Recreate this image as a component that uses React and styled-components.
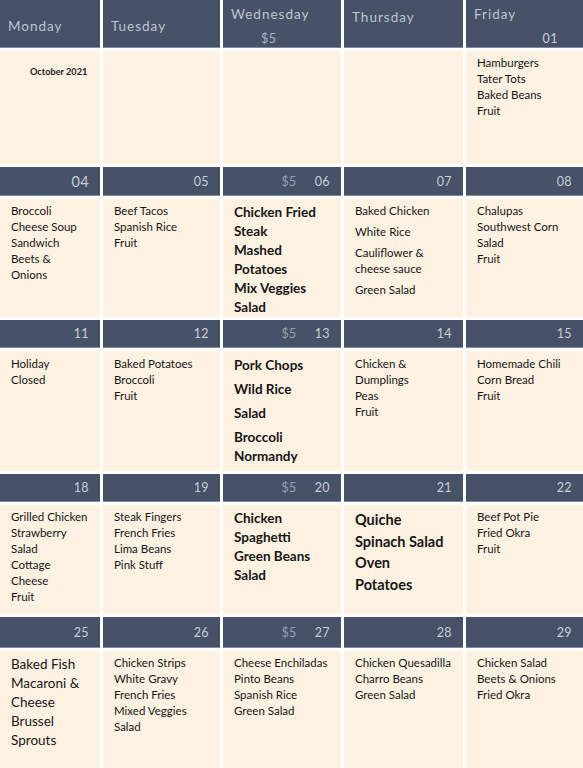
import React from "react";
import styled, { createGlobalStyle, css } from "styled-components";

const Global = createGlobalStyle`
  html, body { margin: 0; padding: 0; background: #ffffff; overflow: hidden; }
  body { font-family: Lato, "Open Sans", sans-serif; }
`;

const Page = styled.div`
  display: grid;
  grid-template-columns: 100px 117px 118px 119px 117px;
  grid-template-rows: 48px 113px 29px 118px 28px 120px 28px 109px 31px 117px;
  gap: 3px;
  width: 583px;
  height: 768px;
  overflow: hidden;
`;

const HeadCell = styled.div`
  box-sizing: border-box;
  background: #475268;
  border-bottom: 1px solid #7e899e;
  color: #c6cdd8;
  font-family: Lato, sans-serif;
  display: flex;
  align-items: center;
  justify-content: flex-end;
  gap: 18px;
  padding-right: 11px;
  font-size: 12.5px;
  letter-spacing: 0.4px;
`;

const DayHead = styled(HeadCell)`
  flex-direction: column;
  align-items: stretch;
  justify-content: flex-start;
  gap: 0;
  padding: ${(p) => p.$top}px 11px 0 8px;
`;

const DayName = styled.div`
  font-size: 13.5px;
  line-height: 17px;
  letter-spacing: 1px;
  color: #bcc5d1;
`;

const HeadExtra = styled.div`
  margin-top: 7px;
  line-height: 17px;
  font-size: 12.5px;
  letter-spacing: 0.5px;
  ${(p) =>
    p.$right
      ? css`
          align-self: flex-end;
          margin-right: 14px;
        `
      : css`
          padding-left: 30px;
          color: #aab3c1;
        `}
`;

const Price = styled.span`
  color: #959fb0;
`;

const DateNum = styled.span`
  font-size: ${(p) => (p.$big ? "14.5px" : "12.5px")};
`;

const Cell = styled.div`
  box-sizing: border-box;
  background: #fdf1e2;
  padding: 4px 6px 0 11px;
  color: #161616;
`;

const Note = styled.div`
  padding: 11px 0 0 19px;
  font-size: 9.2px;
  font-weight: 700;
  line-height: 12px;
  color: #222;
`;

const variants = {
  sm: css`
    font-size: 11.5px;
    line-height: 16px;
    font-weight: 400;
  `,
  md: css`
    font-size: 13.5px;
    line-height: 19px;
    font-weight: 400;
  `,
  bold: css`
    font-size: 13.5px;
    line-height: 19px;
    font-weight: 700;
  `,
  boldLg: css`
    font-size: 14.5px;
    line-height: 21.5px;
    font-weight: 700;
  `,
};

const ItemList = styled.div`
  display: flex;
  flex-direction: column;
  gap: ${(p) => p.$gap || 0}px;
  padding-top: ${(p) => p.$pt || 0}px;
`;

const Item = styled.div`
  white-space: pre-line;
  ${(p) => variants[p.$v || "sm"]}
`;

const headers1 = [
  { name: "Monday", top: 18 },
  { name: "Tuesday", top: 18 },
  { name: "Wednesday", top: 6, extra: "$5" },
  { name: "Thursday", top: 9 },
  { name: "Friday", top: 6, extra: "01", right: true },
];

const weeks = [
  {
    heads: null,
    cells: [
      { note: "October 2021" },
      {},
      {},
      {},
      { items: ["Hamburgers", "Tater Tots", "Baked Beans", "Fruit"], pt: -1 },
    ],
  },
  {
    heads: [{ n: "04", big: true }, { n: "05" }, { n: "06", price: true }, { n: "07" }, { n: "08" }],
    cells: [
      { items: ["Broccoli", "Cheese Soup", "Sandwich", "Beets &", "Onions"] },
      { items: ["Beef Tacos", "Spanish Rice", "Fruit"] },
      {
        v: "bold",
        pt: -1,
        items: ["Chicken Fried", "Steak", "Mashed", "Potatoes", "Mix Veggies", "Salad"],
      },
      {
        gap: 5,
        items: ["Baked Chicken", "White Rice", "Cauliflower &\ncheese sauce", "Green Salad"],
      },
      { items: ["Chalupas", "Southwest Corn", "Salad", "Fruit"] },
    ],
  },
  {
    heads: [{ n: "11" }, { n: "12" }, { n: "13", price: true }, { n: "14" }, { n: "15" }],
    cells: [
      { items: ["Holiday", "Closed"], pt: 1 },
      { items: ["Baked Potatoes", "Broccoli", "Fruit"], pt: 1 },
      {
        v: "bold",
        gap: 5,
        pt: 1,
        items: ["Pork Chops", "Wild Rice", "Salad", "Broccoli\nNormandy"],
      },
      { items: ["Chicken &", "Dumplings", "Peas", "Fruit"], pt: 1 },
      { items: ["Homemade Chili", "Corn Bread", "Fruit"], pt: 1 },
    ],
  },
  {
    heads: [{ n: "18" }, { n: "19" }, { n: "20", price: true }, { n: "21" }, { n: "22" }],
    cells: [
      { items: ["Grilled Chicken", "Strawberry", "Salad", "Cottage", "Cheese", "Fruit"] },
      { items: ["Steak Fingers", "French Fries", "Lima Beans", "Pink Stuff"] },
      { v: "bold", items: ["Chicken", "Spaghetti", "Green Beans", "Salad"] },
      { v: "boldLg", items: ["Quiche", "Spinach Salad", "Oven", "Potatoes"] },
      { items: ["Beef Pot Pie", "Fried Okra", "Fruit"] },
    ],
  },
  {
    heads: [{ n: "25" }, { n: "26" }, { n: "27", price: true }, { n: "28" }, { n: "29" }],
    cells: [
      { v: "md", items: ["Baked Fish", "Macaroni &", "Cheese", "Brussel", "Sprouts"] },
      {
        items: ["Chicken Strips", "White Gravy", "French Fries", "Mixed Veggies", "Salad"],
      },
      { items: ["Cheese Enchiladas", "Pinto Beans", "Spanish Rice", "Green Salad"] },
      { items: ["Chicken Quesadilla", "Charro Beans", "Green Salad"] },
      { items: ["Chicken Salad", "Beets & Onions", "Fried Okra"] },
    ],
  },
];

function BodyCell({ cell }) {
  return (
    <Cell>
      {cell.note && <Note>{cell.note}</Note>}
      {cell.items && (
        <ItemList $gap={cell.gap} $pt={cell.pt}>
          {cell.items.map((t, i) => (
            <Item key={i} $v={cell.v}>
              {t}
            </Item>
          ))}
        </ItemList>
      )}
    </Cell>
  );
}

export default function App() {
  return (
    <>
      <Global />
      <Page>
        {weeks.map((w, wi) => (
          <React.Fragment key={wi}>
            {w.heads
              ? w.heads.map((h, i) => (
                  <HeadCell key={"h" + i}>
                    {h.price && <Price>$5</Price>}
                    <DateNum $big={h.big}>{h.n}</DateNum>
                  </HeadCell>
                ))
              : headers1.map((h, i) => (
                  <DayHead key={"d" + i} $top={h.top}>
                    <DayName>{h.name}</DayName>
                    {h.extra && <HeadExtra $right={h.right}>{h.extra}</HeadExtra>}
                  </DayHead>
                ))}
            {w.cells.map((c, i) => (
              <BodyCell key={"c" + i} cell={c} />
            ))}
          </React.Fragment>
        ))}
      </Page>
    </>
  );
}
